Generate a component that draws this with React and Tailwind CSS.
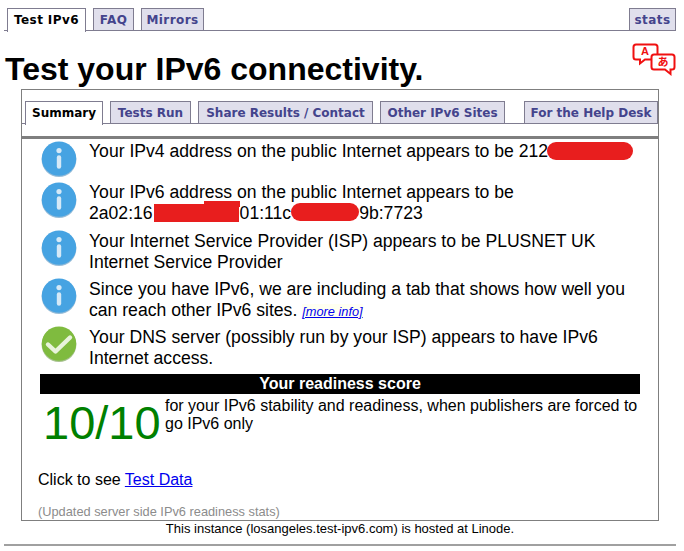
import React from 'react';

const tabBase = "font-['DejaVu_Sans',sans-serif] text-[12px] font-bold leading-[21px] pt-[1px] border border-[#7f7c90] text-center whitespace-nowrap shrink-0";
const tabOff = tabBase + " bg-[#e0dfec] text-[#44448c] h-[23px]";
const tabOn = tabBase + " bg-white text-black border-b-0 h-[24px] mb-[-1px] relative";

function InfoIcon() {
  return (
    <svg width="36" height="36" viewBox="0 0 36 36" className="shrink-0">
      <circle cx="18" cy="18.6" r="17.4" fill="#3f85b8" opacity="0.55" />
      <circle cx="18" cy="17.6" r="17.2" fill="#46a3e2" />
      <circle cx="18" cy="9.6" r="2.6" fill="#d5e9f7" />
      <rect x="15.8" y="14.2" width="4.4" height="13.6" rx="2.2" fill="#d5e9f7" />
    </svg>
  );
}

function CheckIcon() {
  return (
    <svg width="36" height="36" viewBox="0 0 36 36" className="shrink-0">
      <circle cx="18" cy="18.6" r="17.4" fill="#5f8f35" opacity="0.55" />
      <circle cx="18" cy="17.6" r="17.2" fill="#7fbb3f" />
      <path d="M7 18.5 L14.5 25.5 L29 11.5" fill="none" stroke="#e8f3dc" strokeWidth="4.4" strokeLinecap="round" strokeLinejoin="round" />
    </svg>
  );
}

function TranslateIcon() {
  return (
    <svg width="44" height="34" viewBox="0 0 44 34" className="shrink-0">
      <path d="M4 1.5 H23 Q25.5 1.5 25.5 4 V14 Q25.5 16.5 23 16.5 H13 L8 20.5 V16.5 H4 Q1.5 16.5 1.5 14 V4 Q1.5 1.5 4 1.5 Z" fill="white" stroke="#f01010" strokeWidth="2" />
      <text x="13" y="12" textAnchor="middle" fontSize="11" fontWeight="700" fill="#f01010" fontFamily="'Liberation Sans',sans-serif">A</text>
      <path d="M22 11.5 H40 Q42.5 11.5 42.5 14 V24 Q42.5 26.5 40 26.5 H38.5 V31 L33 26.5 H22 Q19.5 26.5 19.5 24 V14 Q19.5 11.5 22 11.5 Z" fill="white" stroke="#f01010" strokeWidth="2" />
      <text x="31" y="23" textAnchor="middle" fontSize="11" fontWeight="700" fill="#f01010" fontFamily="'Noto Sans CJK JP',sans-serif">あ</text>
    </svg>
  );
}

function Row({ icon, children, className, textClass }) {
  return (
    <div className={"flex gap-[12px] pl-[19px] text-[17.6px] leading-[21px] text-black " + className}>
      {icon}
      <div className={"relative grow " + (textClass || "")}>{children}</div>
    </div>
  );
}

export default function App() {
  return (
    <div className="w-[684px] h-[551px] overflow-hidden bg-white font-['Liberation_Sans',sans-serif]">
      <div className="pt-[8px] ml-[4px] mr-[8px] border-b border-[#7f7c90] h-[31px] flex pl-[3px] tracking-[0.4px]">
        <div className={tabOn + " w-[79px]"}>Test IPv6</div>
        <div className={tabOff + " w-[41px] ml-[7px]"}>FAQ</div>
        <div className={tabOff + " w-[63px] ml-[7px]"}>Mirrors</div>
        <div className={tabOff + " w-[47px] ml-auto"}>stats</div>
      </div>
      <div className="flex justify-between pl-[5px] pr-[8px] h-[58px]">
        <h1 className="text-[32px] font-bold leading-[37px] mt-[20px] text-black">Test your IPv6 connectivity.</h1>
        <div className="mt-[12px]"><TranslateIcon /></div>
      </div>
      <div className="relative ml-[21px] w-[638px] h-[432px] border border-[#7f7f7f]">
        <div className="mt-[11px] h-[23px] border-b border-[#7f7c90] flex pl-[3px]">
          <div className={tabOn + " w-[78px]"}>Summary</div>
          <div className={tabOff + " w-[81px] ml-[7px]"}>Tests Run</div>
          <div className={tabOff + " w-[175px] ml-[7px]"}>Share Results / Contact</div>
          <div className={tabOff + " w-[125px] ml-[7px]"}>Other IPv6 Sites</div>
          <div className={tabOff + " w-[134px] ml-[19px]"}>For the Help Desk</div>
        </div>
        <div className="mt-[12px] h-[3px] bg-[#7f7f7f]" />
        <div className="pt-[2px]">
          <Row icon={<InfoIcon />} className="h-[41px]">
            Your IPv4 address on the public Internet appears to be 212
            <span className="absolute left-[458px] top-[1px] w-[86px] h-[18px] rounded-full bg-[#e81e1e]" />
          </Row>
          <Row icon={<InfoIcon />} className="h-[48px]">
            Your IPv6 address on the public Internet appears to be<br />
            2a02:16<span className="inline-block w-[87px]" />01:11c<span className="inline-block w-[68px]" />9b:7723
            <span className="absolute left-[65px] top-[22px] w-[85px] h-[18px] bg-[#e81e1e]" />
            <span className="absolute left-[115px] top-[19px] w-[36px] h-[6px] bg-[#e81e1e]" />
            <span className="absolute left-[202px] top-[21px] w-[68px] h-[18px] rounded-full bg-[#e81e1e]" />
          </Row>
          <Row icon={<InfoIcon />} className="h-[48px]" textClass="pt-[1px]">
            Your Internet Service Provider (ISP) appears to be PLUSNET UK<br />
            Internet Service Provider
          </Row>
          <Row icon={<InfoIcon />} className="h-[48px]" textClass="pt-[1px]">
            Since you have IPv6, we are including a tab that shows how well you<br />
            can reach other IPv6 sites.{' '}
            <a className="text-[12.8px] italic underline text-[#0000ee] bg-[#fffff0]">[more info]</a>
          </Row>
          <Row icon={<CheckIcon />} className="h-[48px]" textClass="pt-[1px]">
            Your DNS server (possibly run by your ISP) appears to have IPv6<br />
            Internet access.
          </Row>
        </div>
        <div className="ml-[18px] w-[600px] h-[20px] bg-black text-white text-[16px] font-bold leading-[20px] text-center">Your readiness score</div>
        <div className="flex ml-[21px] mt-[1px]">
          <div className="text-[47px] leading-[55px] text-[#008000] w-[122px] shrink-0">10/10</div>
          <div className="text-[16px] leading-[18px] text-black w-[480px] pt-[2px]">for your IPv6 stability and readiness, when publishers are forced to go IPv6 only</div>
        </div>
        <div className="ml-[16px] mt-[21px] text-[16px] leading-[18px] text-black">
          Click to see <a className="text-[#0000ee] underline">Test Data</a>
        </div>
        <div className="ml-[16px] mt-[15px] text-[12.8px] leading-[16px] text-[#8c8c8c]">(Updated server side IPv6 readiness stats)</div>
      </div>
      <div className="text-center text-[13px] leading-[15px] text-black w-[680px]">This instance (losangeles.test-ipv6.com) is hosted at Linode.</div>
      <div className="ml-[4px] mr-[8px] mt-[8px] h-[2px] bg-[#a0a0a0]" />
    </div>
  );
}
